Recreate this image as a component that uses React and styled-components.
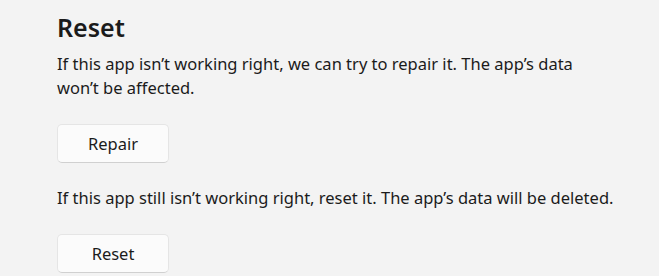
import React from "react";
import styled, { createGlobalStyle } from "styled-components";

const GlobalStyle = createGlobalStyle`
  html, body {
    margin: 0;
    padding: 0;
    background: #f3f3f3;
  }
  body {
    font-family: "Noto Sans", "Open Sans", sans-serif;
    color: #1b1b1b;
  }
`;

const Section = styled.section`
  display: flex;
  flex-direction: column;
  align-items: flex-start;
  padding: 10px 0 0 57px;
  width: 570px;
`;

const Title = styled.h2`
  margin: 0 0 8px;
  font-size: 25px;
  line-height: 34px;
  font-weight: 600;
`;

const Description = styled.p`
  margin: 0;
  font-size: 16.5px;
  line-height: 24px;
  max-width: 557px;
`;

const ActionButton = styled.button`
  margin: ${(p) => p.$gap || "24px 0 23px"};
  width: 112px;
  height: 39px;
  box-sizing: border-box;
  border: 1px solid #e5e5e5;
  border-bottom-color: #d0d0d0;
  border-radius: 5px;
  background: #fbfbfb;
  font-family: inherit;
  font-size: 16.5px;
  color: #1b1b1b;
  cursor: pointer;

  &:hover {
    background: #f6f6f6;
  }
`;

export default function App() {
  return (
    <>
      <GlobalStyle />
      <Section>
        <Title>Reset</Title>
        <Description>
          If this app isn’t working right, we can try to repair it. The app’s
          data won’t be affected.
        </Description>
        <ActionButton>Repair</ActionButton>
        <Description>
          If this app still isn’t working right, reset it. The app’s data will
          be deleted.
        </Description>
        <ActionButton $gap="24px 0 0">Reset</ActionButton>
      </Section>
    </>
  );
}
